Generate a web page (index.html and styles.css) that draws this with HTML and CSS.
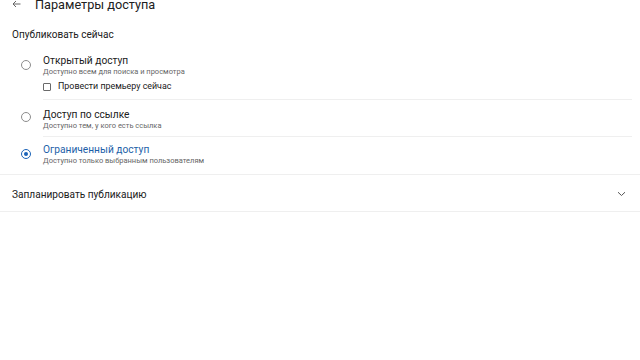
FILE: index.html
```html
<!DOCTYPE html>
<html lang="ru">
<head>
<meta charset="utf-8">
<link rel="stylesheet" href="styles.css">
</head>
<body>
<div class="page">
  <header class="header">
    <svg class="back" width="9" height="8" viewBox="0 0 9 8"><path d="M8.5 4H1M4 1L1 4l3 3" fill="none" stroke="#666" stroke-width="1"/></svg>
    <h1 class="title">Параметры доступа</h1>
  </header>
  <div class="section-label">Опубликовать сейчас</div>
  <div class="options">
    <div class="option first">
      <span class="radio"></span>
      <div class="option-body">
        <div class="option-title">Открытый доступ</div>
        <div class="option-sub">Доступно всем для поиска и просмотра</div>
        <label class="check"><span class="box"></span>Провести премьеру сейчас</label>
      </div>
    </div>
    <div class="option second">
      <span class="radio"></span>
      <div class="option-body">
        <div class="option-title">Доступ по ссылке</div>
        <div class="option-sub">Доступно тем, у кого есть ссылка</div>
      </div>
    </div>
    <div class="option third selected">
      <span class="radio on"></span>
      <div class="option-body">
        <div class="option-title">Ограниченный доступ</div>
        <div class="option-sub">Доступно только выбранным пользователям</div>
      </div>
    </div>
  </div>
  <div class="schedule">
    <span>Запланировать публикацию</span>
    <svg class="chev" width="9" height="6" viewBox="0 0 9 6"><path d="M1 1.2l3.5 3.3L8 1.2" fill="none" stroke="#555" stroke-width="1"/></svg>
  </div>
</div>
</body>
</html>
```

FILE: styles.css
```css
* { box-sizing: border-box; }
html, body { margin: 0; background: #fff; }
body { font-family: Roboto, "Noto Sans", sans-serif; color: #202020; }
.page { width: 640px; height: 360px; overflow: hidden; }
.header { display: flex; align-items: center; height: 14px; margin-top: -2px; padding-left: 12px; }
.back { flex: none; margin-top: -3px; }
.title { margin: 0 0 0 14px; font-size: 12.7px; font-weight: 400; line-height: 14px; color: #202020; }
.section-label { font-size: 10px; line-height: 14px; margin-top: 16px; padding-left: 12px; }
.options { margin-top: 12px; padding-right: 8px; }
.option { display: flex; align-items: flex-start; }
.radio { flex: none; width: 10px; height: 10px; border: 1px solid #8c8c8c; border-radius: 50%; margin: 6px 12px 0 21px; position: relative; }
.second .radio { margin-top: 12px; }
.third .radio { margin-top: 12px; }
.radio.on { border-color: #1a63b8; border-width: 1.2px; }
.radio.on::after { content: ""; position: absolute; left: 1.6px; top: 1.6px; width: 4.4px; height: 4.4px; border-radius: 50%; background: #1a63b8; }
.option-body { flex: 1; border-bottom: 1px solid #efefef; }
.first .option-body { padding-bottom: 6px; }
.second .option-body { padding: 8px 0 5px; }
.third .option-body { padding: 6px 0 8px; border-bottom: none; }
.option-title { font-size: 10.2px; line-height: 13px; }
.selected .option-title { color: #1d5fa8; }
.option-sub { font-size: 7.5px; line-height: 10px; color: #666; }
.check { display: flex; align-items: center; font-size: 8.9px; line-height: 13px; margin-top: 3px; }
.box { flex: none; width: 8px; height: 8px; border: 1px solid #6a6a6a; border-radius: 1px; margin-right: 7px; }
.schedule { display: flex; align-items: center; justify-content: space-between; height: 38px; padding: 2px 14px 0 12px; border-top: 1px solid #efefef; border-bottom: 1px solid #efefef; font-size: 10.1px; }
```
